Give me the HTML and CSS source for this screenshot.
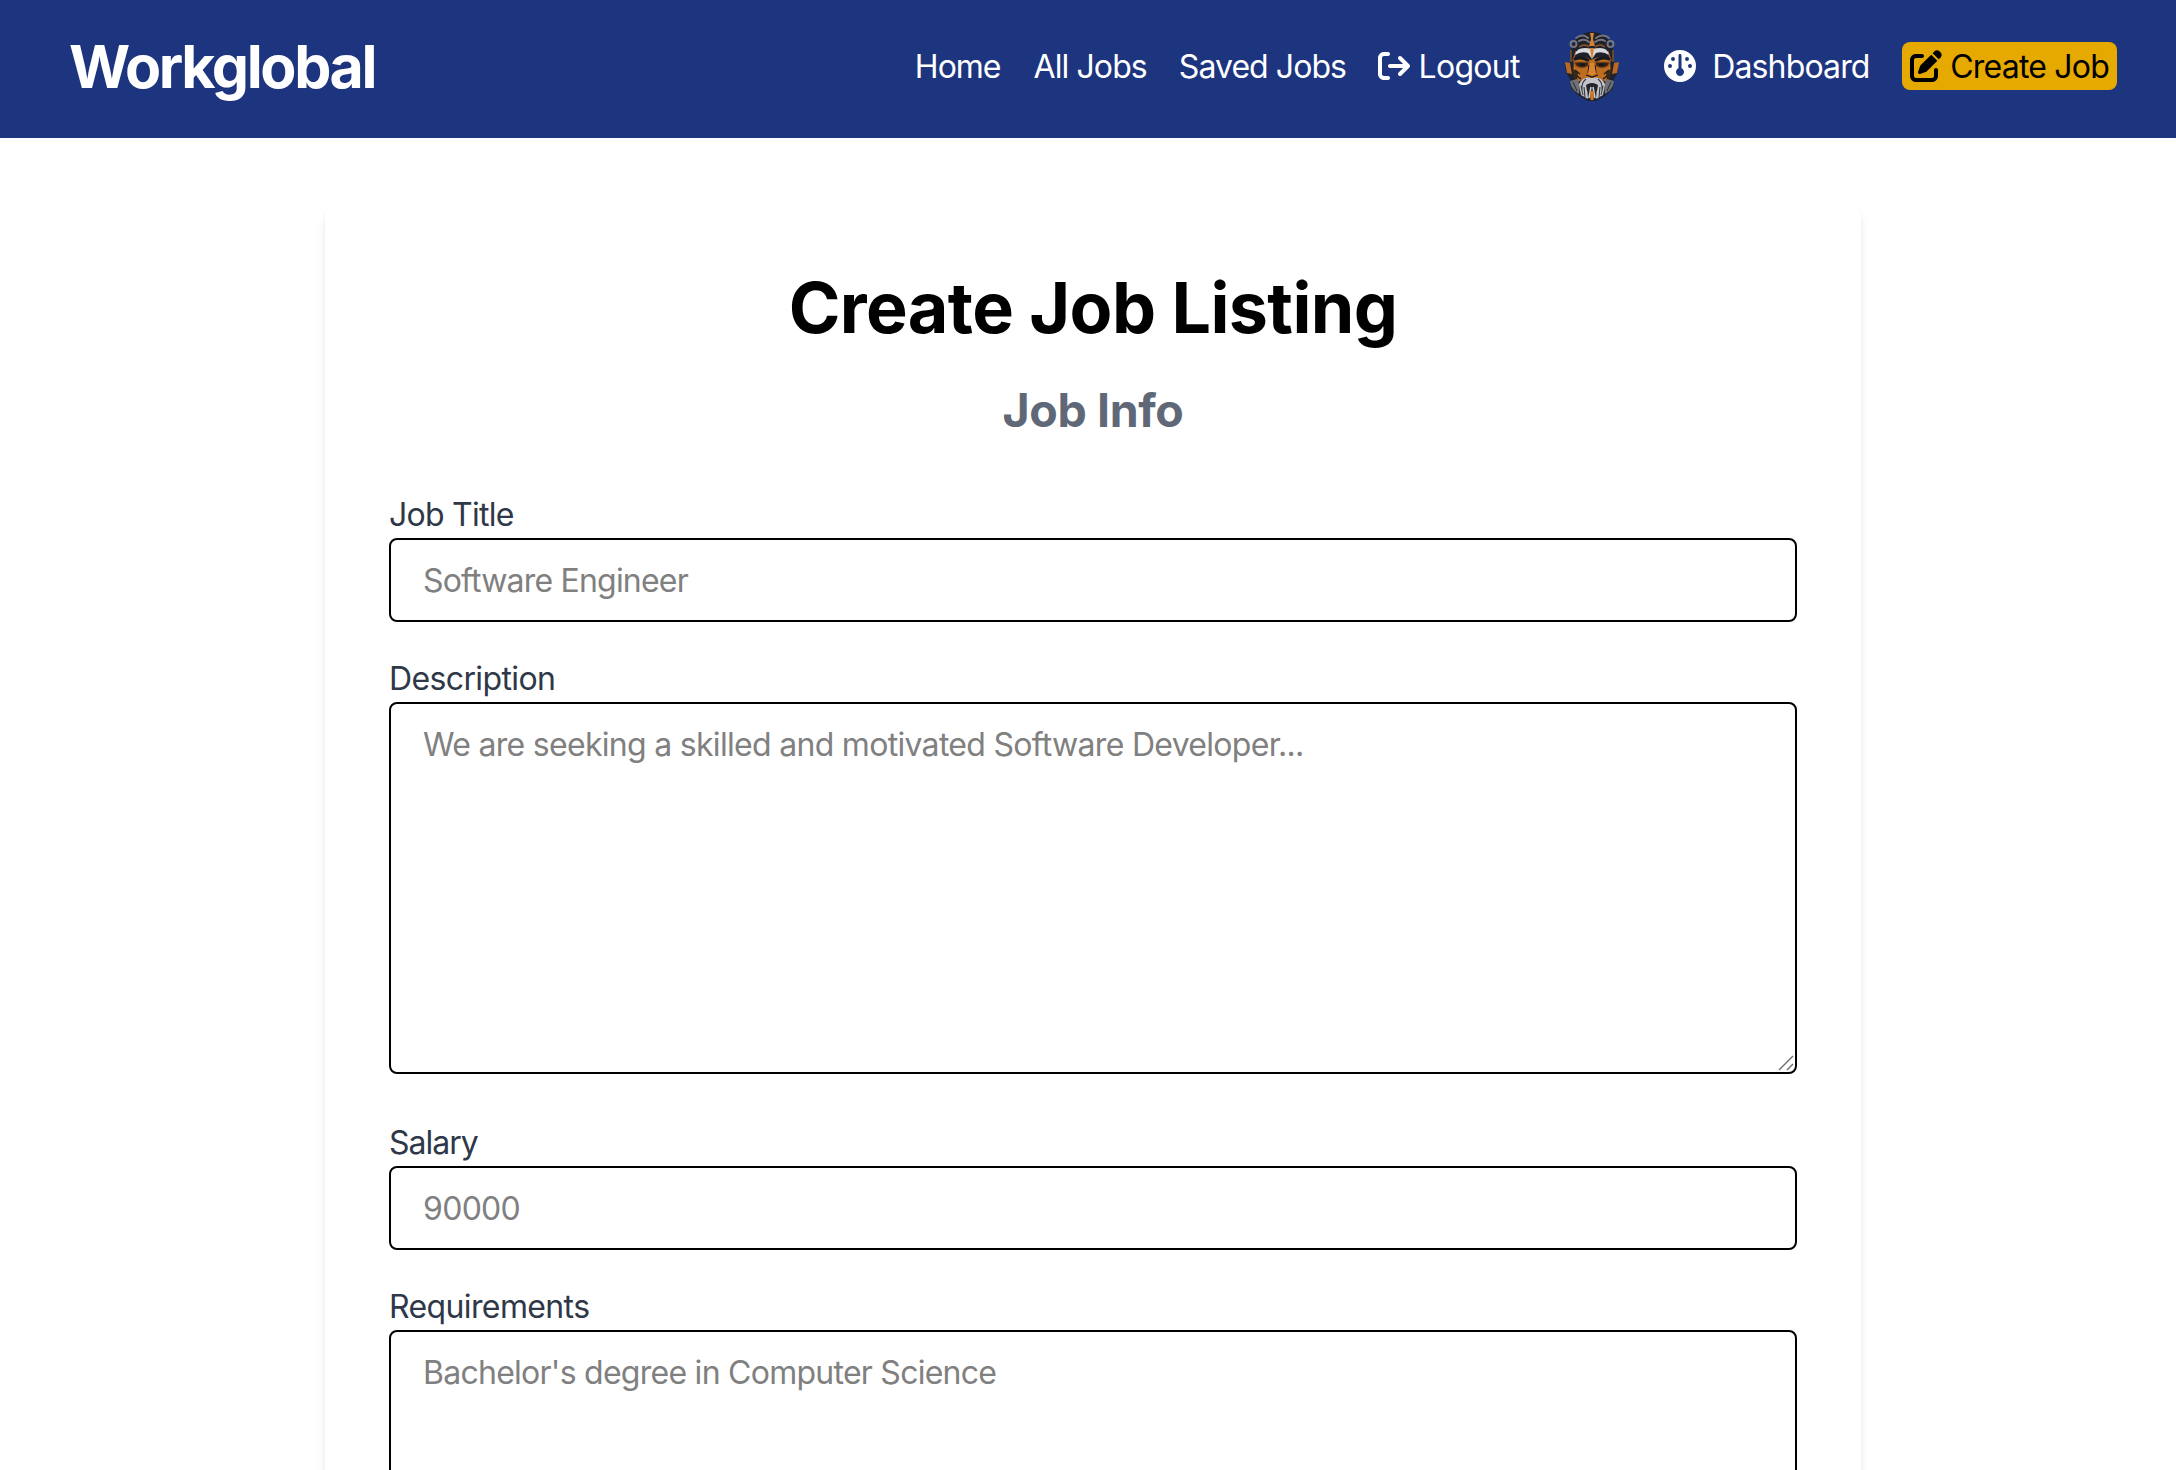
FILE: index.html
```html
<!DOCTYPE html>
<html lang="en">
<head>
<meta charset="utf-8">
<title>Workglobal - Create Job Listing</title>
<link rel="stylesheet" href="styles.css">
</head>
<body>
<header class="header">
  <h1 class="logo">Workglobal</h1>
  <nav class="nav">
    <a class="nav-link home"><span>Home</span></a>
    <a class="nav-link"><span>All Jobs</span></a>
    <a class="nav-link saved"><span>Saved Jobs</span></a>
    <a class="nav-link logout">
      <svg class="icon" viewBox="0 0 512 512"><path d="M502.6 278.6c12.5-12.5 12.5-32.8 0-45.3l-128-128c-12.5-12.5-32.8-12.5-45.3 0s-12.5 32.8 0 45.3L402.7 224 192 224c-17.7 0-32 14.3-32 32s14.3 32 32 32l210.7 0-73.4 73.4c-12.5 12.5-12.5 32.8 0 45.3s32.8 12.5 45.3 0l128-128zM160 96c17.7 0 32-14.3 32-32s-14.3-32-32-32L96 32C43 32 0 75 0 128L0 384c0 53 43 96 96 96l64 0c17.7 0 32-14.3 32-32s-14.3-32-32-32l-64 0c-17.7 0-32-14.3-32-32l0-256c0-17.7 14.3-32 32-32l64 0z"/></svg>
      <span>Logout</span>
    </a>
    <svg class="avatar" viewBox="0 0 70 82">
      <!-- head and hair -->
      <path fill="#20222b" d="M35 7C45 7 54 14 56 24L57 38 61 39 61 47 57 54 56 64 48 71 39 76 31 76 21 70 14 64 13 54 9 47 8 39 13 38 14 24C16 14 25 7 35 7Z"/>
      <g fill="none" stroke="#74777f" stroke-width="2" stroke-linecap="round">
        <path d="M19 13Q26 8 31 13M39 13Q46 8 52 13M22 16Q28 13 32 17M38 17Q43 13 48 16"/>
        <circle cx="16.500" cy="19" r="3"/><circle cx="53.500" cy="19" r="3"/>
      </g>
      <path fill="none" stroke="#8f5827" stroke-width="1.300" d="M22 22Q28 18 32 22M38 22Q43 18 48 22M14 25V37M56 25V37M19 26L16 36M51 26L54 36"/>
      <!-- ears and face -->
      <path fill="#b96a20" d="M8 37L13 38 15 49 10 48ZM62 37L57 38 55 49 60 48Z"/>
      <path fill="#bd6c20" d="M17 35Q25 29 34 35Q45 29 53 35L54 49 49 57 42 53H28L21 57 16 49Z"/>
      <path fill="#3a2719" d="M16 44L21 48 20 57 16 51ZM54 44L49 48 50 57 54 51Z"/>
      <!-- forehead markings -->
      <path fill="#d9dadd" d="M18 30Q19 23 28 23Q34 23 35 25Q36 23 43 23Q51 23 52 30Q46 26 39 28L35 34 31 28Q24 26 18 30Z"/>
      <path fill="#d58232" d="M33 8H37L36 14 38 21H32L34 14ZM33 23H37L35.500 33H34.500Z"/>
      <!-- brows, glasses and nose -->
      <path fill="none" stroke="#17191f" stroke-width="3" d="M17 34.500Q25 31 32 36M38 36Q45 31 53 34.500"/>
      <path fill="#382416" stroke="#9a5a21" stroke-width="1.200" d="M17 37H32L31 41Q25 45 19 41ZM38 37H53L51 41Q45 45 39 41Z"/>
      <path fill="#141519" d="M21 39L25 38 29 40 25 41ZM41 40L45 38 49 39 45 41Z"/>
      <path fill="none" stroke="#17191f" stroke-width="1.200" d="M32 40L31 48M38 40L39 48M29 50Q32 51 35 52Q38 51 41 50M18 45L23 49M52 45L47 49M20 51L24 54M50 51L46 54"/>
      <path fill="#d98431" d="M33 38H37L39 48 35 51 31 48Z"/>
      <!-- moustache and beard -->
      <path fill="#6f7178" d="M13 56L20 54 23 61 22 69 15 64ZM57 56L50 54 47 61 48 69 55 64Z"/>
      <path fill="#c2c3c8" d="M34 53Q26 51 22 59L24 70 31 74 30 61 35 58 40 61 39 74 46 70 48 59Q44 51 36 53Z"/>
      <path fill="none" stroke="#34363e" stroke-width="1.100" d="M29 54Q24 58 25 65M41 54Q46 58 45 65M27 62L28 72M43 62L42 72M16 57L20 66M54 57L50 66M24 61L26 70M46 61L44 70M13 60L18 67M57 60L52 67"/>
      <path fill="#22242b" d="M29 60Q35 56 41 60L40 66H30Z"/>
      <path fill="none" stroke="#d0d1d5" stroke-width="1.500" d="M34 62L32 73M36 62L38 73"/>
      <path fill="#ce7b2b" d="M33 66H37L36.500 75H33.500Z"/>
    </svg>
    <a class="nav-link dashboard">
      <svg class="icon" viewBox="0 0 512 512"><path d="M0 256a256 256 0 1 1 512 0A256 256 0 1 1 0 256zm320 96c0-26.900-16.500-49.900-40-59.300V88c0-13.300-10.700-24-24-24s-24 10.700-24 24V292.700c-23.500 9.500-40 32.500-40 59.300c0 35.300 28.700 64 64 64s64-28.700 64-64zM144 176a32 32 0 1 0 0-64 32 32 0 1 0 0 64zm-16 80a32 32 0 1 0 -64 0 32 32 0 1 0 64 0zm288 32a32 32 0 1 0 0-64 32 32 0 1 0 0 64zM400 144a32 32 0 1 0 -64 0 32 32 0 1 0 64 0z"/></svg>
      <span>Dashboard</span>
    </a>
    <a class="nav-link create">
      <svg class="icon" viewBox="0 0 512 512"><path d="M471.600 21.700c-21.900-21.900-57.300-21.900-79.200 0L362.300 51.700l97.900 97.900 30.100-30.100c21.900-21.900 21.900-57.300 0-79.200L471.600 21.700zm-299.200 220c-6.100 6.100-10.800 13.600-13.500 21.900l-29.600 88.800c-2.900 8.600-.6 18.100 5.800 24.600s15.900 8.700 24.600 5.800l88.800-29.600c8.200-2.700 15.700-7.400 21.900-13.500L437.700 172.300 339.700 74.300 172.400 241.700zM96 64C43 64 0 107 0 160V416c0 53 43 96 96 96H352c53 0 96-43 96-96V320c0-17.700-14.300-32-32-32s-32 14.300-32 32v96c0 17.700-14.300 32-32 32H96c-17.700 0-32-14.300-32-32V160c0-17.700 14.300-32 32-32h96c17.700 0 32-14.300 32-32s-14.300-32-32-32H96z"/></svg>
      <span>Create Job</span>
    </a>
  </nav>
</header>
<main class="card">
  <h2 class="title">Create Job Listing</h2>
  <h3 class="subtitle">Job Info</h3>
  <form>
    <div class="field">
      <label class="label" for="title">Job Title</label>
      <input class="control title-input" id="title" type="text" placeholder="Software Engineer">
    </div>
    <div class="field field-area">
      <label class="label description-label" for="description">Description</label>
      <div class="area-box">
        <textarea class="control area" id="description" placeholder="We are seeking a skilled and motivated Software Developer..."></textarea>
        <svg class="grip" viewBox="0 0 16 16"><path d="M1 15L15 1M9 15L15 9"/></svg>
      </div>
    </div>
    <div class="field">
      <label class="label salary-label" for="salary">Salary</label>
      <input class="control salary-input" id="salary" type="text" placeholder="90000">
    </div>
    <div class="field field-area">
      <label class="label requirements-label" for="requirements">Requirements</label>
      <div class="area-box">
        <textarea class="control area requirements" id="requirements" placeholder="Bachelor's degree in Computer Science"></textarea>
        <svg class="grip" viewBox="0 0 16 16"><path d="M1 15L15 1M9 15L15 9"/></svg>
      </div>
    </div>
  </form>
</main>
</body>
</html>
```
FILE: styles.css
```css
* { box-sizing: border-box; }

body {
  margin: 0;
  height: 1470px;
  overflow: hidden;
  background: #fff;
  color: #000;
  font-family: Inter, "Liberation Sans", sans-serif;
  font-size: 32px;
  line-height: 48px;
}

.header {
  display: flex;
  align-items: center;
  justify-content: space-between;
  height: 138px;
  padding: 0 59px 6px 69px;
  background: #1d347f;
  color: #fff;
}

.logo {
  margin: 0;
  padding-top: 2px;
  font-size: 59px;
  font-weight: 700;
  line-height: 72px;
  letter-spacing: -2.37px;
}

.nav {
  display: flex;
  align-items: center;
  gap: 32px;
}

.nav-link {
  display: flex;
  align-items: center;
  white-space: nowrap;
  letter-spacing: -0.9px;
}

.nav-link span { padding-top: 2px; }

.home { margin-right: 1px; letter-spacing: -1px; }
.saved { letter-spacing: -0.94px; }
.logout { gap: 8.6px; letter-spacing: -0.72px; }
.dashboard { gap: 16.5px; letter-spacing: -0.87px; }

.create {
  gap: 8.8px;
  height: 48px;
  padding: 0 8px;
  border-radius: 8px;
  background: #e6a900;
  color: #000;
  letter-spacing: -0.8px;
}

.icon {
  flex: none;
  width: 32px;
  height: 32px;
  fill: currentColor;
}

.avatar {
  flex: none;
  width: 70px;
  height: 82px;
  margin: 0 5px 0 5px;
}

.card {
  width: 1536px;
  margin: 64px 0 0 325px;
  padding: 64px;
  border-radius: 16px;
  box-shadow: 0 8px 12px -2px rgba(0, 0, 0, 0.1), 0 4px 8px -4px rgba(0, 0, 0, 0.1);
}

.title {
  height: 80px;
  margin: 0 0 32px;
  text-align: center;
  font-size: 70px;
  font-weight: 700;
  line-height: 83px;
  letter-spacing: -0.6px;
}

.subtitle {
  height: 64px;
  margin: 0 0 48px;
  text-align: center;
  color: #606877;
  font-size: 46.5px;
  font-weight: 700;
  line-height: 65px;
  letter-spacing: -0.4px;
}

.field { margin-bottom: 32px; }
.field-area { margin-bottom: 44px; }

.label {
  display: block;
  height: 48px;
  color: #2f3848;
  line-height: 50px;
  letter-spacing: -0.75px;
}

.description-label,
.requirements-label { letter-spacing: -0.62px; }
.salary-label { letter-spacing: -1px; }

.control {
  display: block;
  width: 100%;
  height: 84px;
  padding: 16px 32px;
  border: 2px solid #000;
  border-radius: 8px;
  outline: none;
  background: #fff;
  color: #000;
  font: inherit;
  letter-spacing: -0.7px;
}

.control::placeholder { color: #808080; opacity: 1; }
.title-input { letter-spacing: -0.8px; }
.salary-input { letter-spacing: -0.7px; }

.area-box { position: relative; }
.area { height: 372px; padding-top: 17px; resize: none; }
.requirements { letter-spacing: -0.74px; }

/* resize handle in the corner of a text area */
.grip {
  position: absolute;
  right: 3px;
  bottom: 3px;
  width: 16px;
  height: 16px;
  fill: none;
  stroke: #6b6b6b;
  stroke-width: 1.4;
}
```
